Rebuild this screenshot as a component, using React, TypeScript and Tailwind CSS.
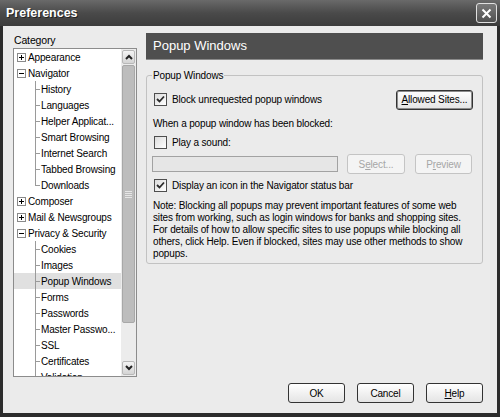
import type { ReactNode } from "react";

const FONT = "font-['Liberation_Sans',Arial,sans-serif]";

type TreeItem = {
  label: string;
  level: 0 | 1;
  box?: "+" | "-";
  last?: boolean;
  selected?: boolean;
};

const tree: TreeItem[] = [
  { label: "Appearance", level: 0, box: "+" },
  { label: "Navigator", level: 0, box: "-" },
  { label: "History", level: 1 },
  { label: "Languages", level: 1 },
  { label: "Helper Applicat...", level: 1 },
  { label: "Smart Browsing", level: 1 },
  { label: "Internet Search", level: 1 },
  { label: "Tabbed Browsing", level: 1 },
  { label: "Downloads", level: 1, last: true },
  { label: "Composer", level: 0, box: "+" },
  { label: "Mail & Newsgroups", level: 0, box: "+" },
  { label: "Privacy & Security", level: 0, box: "-" },
  { label: "Cookies", level: 1 },
  { label: "Images", level: 1 },
  { label: "Popup Windows", level: 1, selected: true },
  { label: "Forms", level: 1 },
  { label: "Passwords", level: 1 },
  { label: "Master Passwo...", level: 1 },
  { label: "SSL", level: 1 },
  { label: "Certificates", level: 1 },
  { label: "Validation", level: 1 },
];

function ExpandBox({ sign }: { sign: "+" | "-" }) {
  return (
    <div className="relative w-[9px] h-[9px] border border-[#8a8a8a] bg-white shrink-0">
      <div className="absolute left-[1px] right-[1px] top-[3px] h-[1px] bg-black" />
      {sign === "+" && <div className="absolute top-[1px] bottom-[1px] left-[3px] w-[1px] bg-black" />}
    </div>
  );
}

function TreeRow({ item }: { item: TreeItem }) {
  if (item.level === 0) {
    return (
      <div className="flex items-center h-[16px] pl-[3px] gap-[1px] whitespace-nowrap">
        <ExpandBox sign={item.box ?? "+"} />
        <span className="pl-[1px]">{item.label}</span>
      </div>
    );
  }
  return (
    <div className={`relative flex items-center h-[16px] pl-[27px] whitespace-nowrap ${item.selected ? "bg-[#e0e0e0]" : ""}`}>
      <div className={`absolute left-[21px] top-0 w-[1px] bg-[#9a9a9a] ${item.last ? "h-[8px]" : "bottom-0"}`} />
      <div className="absolute left-[21px] top-[8px] w-[5px] h-[1px] bg-[#9a9a9a]" />
      <span>{item.label}</span>
    </div>
  );
}

function Arrow({ dir }: { dir: "up" | "down" }) {
  return (
    <div className="h-[14px] mx-[1px] my-[1px] flex items-center justify-center rounded-[2px] border border-[#b8b8b8] bg-linear-to-b from-[#f4f4f4] to-[#d4d4d4]">
      <svg width="8" height="6" viewBox="0 0 8 6">
        <polyline
          points={dir === "up" ? "1,5 4,2 7,5" : "1,1 4,4 7,1"}
          fill="none"
          stroke="#222"
          strokeWidth="2"
        />
      </svg>
    </div>
  );
}

function Scrollbar() {
  return (
    <div className="w-[15px] shrink-0 flex flex-col bg-[#ececec]">
      <Arrow dir="up" />
      <div className="h-[258px] mx-[1px] rounded-[2px] bg-[#bdbdbd] border border-[#a8a8a8] flex flex-col items-center justify-center gap-[1px]">
        <div className="w-[7px] h-[1px] bg-[#e6e6e6]" />
        <div className="w-[7px] h-[1px] bg-[#e6e6e6]" />
        <div className="w-[7px] h-[1px] bg-[#e6e6e6]" />
        <div className="w-[7px] h-[1px] bg-[#e6e6e6]" />
      </div>
      <div className="flex-1" />
      <Arrow dir="down" />
    </div>
  );
}

function Checkbox({ checked }: { checked?: boolean }) {
  return (
    <div className="w-[13px] h-[13px] shrink-0 border border-[#4e4e4e] bg-linear-to-br from-[#dcdcdc] to-white flex items-center justify-center">
      {checked && (
        <svg width="9" height="9" viewBox="0 0 9 9">
          <polyline points="1,4 3.5,6.5 8,1.5" fill="none" stroke="#2a2a2a" strokeWidth="1.8" />
        </svg>
      )}
    </div>
  );
}

function Button({
  children,
  width,
  disabled,
  isDefault,
}: {
  children: ReactNode;
  width: string;
  disabled?: boolean;
  isDefault?: boolean;
}) {
  const base = "flex items-center justify-center rounded-[3px] h-[20px] shrink-0 whitespace-nowrap";
  if (disabled) {
    return <div className={`${base} ${width} border border-[#c4c4c4] bg-[#f4f4f4] text-[#a6a6a6]`}>{children}</div>;
  }
  return (
    <div
      className={`${base} ${width} border border-[#333] bg-linear-to-b from-white to-[#e4e4e4] ${
        isDefault ? "shadow-[inset_0_0_0_1px_#8c8c8c]" : ""
      }`}
    >
      {children}
    </div>
  );
}

export default function App() {
  return (
    <div className={`${FONT} w-[500px] h-[417px] bg-[#2c2c2c] flex flex-col text-[10px] tracking-[-0.15px] text-black overflow-hidden`}>
      {/* title bar */}
      <div className="h-[26px] shrink-0 flex items-center bg-linear-to-b from-[#6a6a6a] via-[#4a4a4a] to-[#3c3c3c]">
        <span className="pl-[6px] text-[12.5px] tracking-normal font-bold text-white [text-shadow:1px_1px_0_#222]">Preferences</span>
        <div className="ml-auto mr-[3px] w-[21px] h-[20px] rounded-[3px] border border-[#e0e0e0] bg-linear-to-b from-[#7a7a7a] to-[#505050] flex items-center justify-center">
          <svg width="11" height="11" viewBox="0 0 11 11">
            <path d="M1.5 1.5 L9.5 9.5 M9.5 1.5 L1.5 9.5" stroke="white" strokeWidth="2" />
          </svg>
        </div>
      </div>

      {/* body */}
      <div className="flex-1 mx-[3px] mb-[4px] bg-[#ebebeb] flex flex-col pt-[7px] pl-[10px] pr-[14px] pb-[10px]">
        <div className="flex gap-[9px] h-[344px]">
          {/* category list */}
          <div className="w-[124px] flex flex-col">
            <div className="h-[15px] leading-[15px] pl-[1px] text-[10.5px]">Category</div>
            <div className="flex-1 min-h-0 flex border border-[#8c8c8c] bg-white">
              <div className="flex-1 overflow-hidden">
                {tree.map((item) => (
                  <TreeRow key={item.label} item={item} />
                ))}
              </div>
              <Scrollbar />
            </div>
          </div>

          {/* settings panel */}
          <div className="w-[337px] flex flex-col">
            <div className="h-[27px] flex items-center pl-[7px] bg-[#4f4f4f] border-b border-[#8a8a8a] text-white text-[13px] tracking-normal">
              Popup Windows
            </div>
            <fieldset className="mt-[9px] border border-[#c2c2c2] rounded-[3px] pl-[5px] pr-[9px] pb-[3px]">
              <legend className="px-[1px] leading-[13px]">Popup Windows</legend>
              <div className="mt-[7px] flex items-center h-[21px] pl-[2px]">
                <Checkbox checked />
                <span className="pl-[5px]">Block unrequested popup windows</span>
                <div className="ml-auto">
                  <Button width="w-[77px]" isDefault>
                    <span>
                      <span className="underline">A</span>llowed Sites...
                    </span>
                  </Button>
                </div>
              </div>
              <div className="mt-[7px] h-[13px] leading-[13px] pl-[1px]">When a popup window has been blocked:</div>
              <div className="mt-[6px] flex items-center h-[13px] pl-[2px]">
                <Checkbox />
                <span className="pl-[5px]">Play a sound:</span>
              </div>
              <div className="mt-[5px] flex items-center h-[20px]">
                <div className="w-[186px] h-[16px] border border-[#a2a2a2] bg-[#e6e6e6]" />
                <div className="ml-[9px]">
                  <Button width="w-[58px]" disabled>
                    <span>
                      S<span className="underline">e</span>lect...
                    </span>
                  </Button>
                </div>
                <div className="ml-[10px]">
                  <Button width="w-[57px]" disabled>
                    <span>
                      P<span className="underline">r</span>eview
                    </span>
                  </Button>
                </div>
              </div>
              <div className="mt-[5px] flex items-center h-[13px] pl-[2px]">
                <Checkbox checked />
                <span className="pl-[5px]">Display an icon in the Navigator status bar</span>
              </div>
              <p className="mt-[8px] leading-[12px] pl-[1px] whitespace-nowrap">
                Note: Blocking all popups may prevent important features of some web
                <br />
                sites from working, such as login windows for banks and shopping sites.
                <br />
                For details of how to allow specific sites to use popups while blocking all
                <br />
                others, click Help. Even if blocked, sites may use other methods to show
                <br />
                popups.
              </p>
            </fieldset>
          </div>
        </div>

        {/* dialog buttons */}
        <div className="mt-[6px] flex justify-end gap-[12px]">
          <Button width="w-[57px]">OK</Button>
          <Button width="w-[57px]">Cancel</Button>
          <Button width="w-[57px]">
            <span>
              <span className="underline">H</span>elp
            </span>
          </Button>
        </div>
      </div>
    </div>
  );
}
